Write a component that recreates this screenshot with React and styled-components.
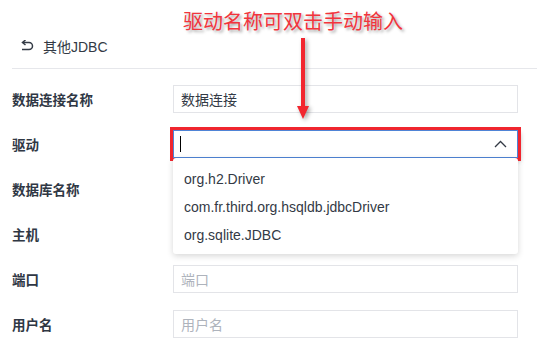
import React from 'react';
import styled, { createGlobalStyle } from 'styled-components';

const GlobalStyle = createGlobalStyle`
  html, body {
    margin: 0;
    padding: 0;
    background: #fff;
  }
  body {
    font-family: 'Liberation Sans', 'Noto Sans CJK SC', sans-serif;
    color: #333;
  }
`;

const fields = [
  { label: '数据连接名称', value: '数据连接' },
  { label: '驱动', select: true },
  { label: '数据库名称', empty: true },
  { label: '主机', empty: true },
  { label: '端口', placeholder: '端口' },
  { label: '用户名', placeholder: '用户名' },
];

const drivers = ['org.h2.Driver', 'com.fr.third.org.hsqldb.jdbcDriver', 'org.sqlite.JDBC'];

const Page = styled.div`
  position: relative;
  width: 537px;
  height: 346px;
  overflow: hidden;
`;

const Header = styled.div`
  display: flex;
  align-items: center;
  gap: 9px;
  margin-left: 12px;
  padding: 36px 0 12px 8px;
  height: 20px;
  border-bottom: 1px solid #e6e7eb;
  font-size: 14px;
  color: #333a45;
`;

const Form = styled.div`
  display: flex;
  flex-direction: column;
  gap: 17px;
  padding: 16px 19px 0 12px;
`;

const Row = styled.div`
  display: grid;
  grid-template-columns: 161px 1fr;
  align-items: center;
  height: 28px;
`;

const Label = styled.div`
  font-size: 13.5px;
  font-weight: 700;
  color: #2f3744;
`;

const Field = styled.div`
  position: relative;
  height: 28px;
`;

const Input = styled.div`
  box-sizing: border-box;
  height: 28px;
  display: flex;
  align-items: center;
  padding: 0 7px;
  border: 1px solid ${(p) => (p.$active ? '#4f84d6' : '#e3e4e8')};
  outline: ${(p) => (p.$active ? '3px solid #f0262f' : 'none')};
  box-shadow: ${(p) => (p.$active ? '2px 3px 5px rgba(0,0,0,0.35)' : 'none')};
  font-size: 14px;
  color: ${(p) => (p.$placeholder ? '#aeb3bc' : '#333a45')};
  background: #fff;
`;

const Caret = styled.span`
  width: 1px;
  height: 16px;
  background: #000;
  margin-left: -1px;
`;

const Chevron = styled.svg`
  margin-left: auto;
  margin-right: 3px;
`;

const Menu = styled.div`
  position: absolute;
  top: 100%;
  left: 0;
  right: 0;
  background: #fff;
  border-radius: 3px;
  box-shadow: 0 2px 6px rgba(0, 0, 0, 0.16);
  padding: 7px 0 5px;
  z-index: 2;
`;

const Item = styled.div`
  height: 28px;
  line-height: 28px;
  padding-left: 11px;
  font-size: 14px;
  color: #333a45;
`;

const Note = styled.div`
  position: absolute;
  left: 183px;
  top: 6px;
  font-family: 'Noto Sans CJK SC', sans-serif;
  font-size: 20px;
  color: #f2343c;
  text-shadow: 2px 2px 3px rgba(0, 0, 0, 0.35);
`;

const Arrow = styled.svg`
  position: absolute;
  left: 295px;
  top: 38px;
  filter: drop-shadow(2px 2px 2px rgba(0, 0, 0, 0.35));
  z-index: 3;
`;

const BackIcon = () => (
  <svg width="14" height="12" viewBox="0 0 14 12">
    <path d="M3 2.5 H9 A3.5 3.5 0 0 1 9 9.5 H2" fill="none" stroke="#333a45" strokeWidth="1.5" />
    <path d="M5.5 0 L2.5 2.5 L5.5 5" fill="none" stroke="#333a45" strokeWidth="1.5" />
  </svg>
);

const App = () => {
  return (
    <Page>
      <GlobalStyle />
      <Header>
        <BackIcon />
        <span>其他JDBC</span>
      </Header>
      <Form>
        {fields.map((f) => (
          <Row key={f.label}>
            <Label>{f.label}</Label>
            {f.select ? (
              <Field>
                <Input $active>
                  <Caret />
                  <Chevron width="13" height="8" viewBox="0 0 13 8">
                    <path d="M1 7 L6.5 1.5 L12 7" fill="none" stroke="#333a45" strokeWidth="1.3" />
                  </Chevron>
                </Input>
                <Menu>
                  {drivers.map((d) => (
                    <Item key={d}>{d}</Item>
                  ))}
                </Menu>
              </Field>
            ) : f.empty ? (
              <Field />
            ) : (
              <Field>
                <Input $placeholder={!f.value}>{f.value || f.placeholder}</Input>
              </Field>
            )}
          </Row>
        ))}
      </Form>
      <Note>驱动名称可双击手动输入</Note>
      <Arrow width="16" height="84" viewBox="0 0 16 84">
        <rect x="6" y="0" width="4" height="70" fill="#f2262f" />
        <path d="M2 68 L14 68 L8 81 Z" fill="#f2262f" />
      </Arrow>
    </Page>
  );
};

export default App;
